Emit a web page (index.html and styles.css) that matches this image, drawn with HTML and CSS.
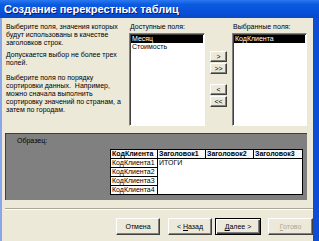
FILE: index.html
```html
<!DOCTYPE html>
<html lang="ru">
<head>
    <meta charset="UTF-8">
    <title>Создание перекрестных таблиц</title>
    <link rel="stylesheet" href="styles.css">
</head>
<body>
    <div class="window">
        <div class="titlebar">Создание перекрестных таблиц</div>
        <div class="dialog">
            <div class="top">
                <div class="intro">
                    <p>Выберите поля, значения которых<br>будут использованы в качестве<br>заголовков строк.</p>
                    <p>Допускается выбор не более трех<br>полей.</p>
                    <p class="last">Выберите поля по порядку<br>сортировки данных.&nbsp; Например,<br>можно сначала выполнить<br>сортировку значений по странам, а<br>затем по городам.</p>
                </div>
                <div class="field-col">
                    <div class="field-label">Доступные поля:</div>
                    <div class="listbox">
                        <div class="item selected">Месяц</div>
                        <div class="item">Стоимость</div>
                    </div>
                </div>
                <div class="move-buttons">
                    <button class="small-btn">&gt;</button>
                    <button class="small-btn">&gt;&gt;</button>
                    <button class="small-btn spaced">&lt;</button>
                    <button class="small-btn">&lt;&lt;</button>
                </div>
                <div class="field-col narrow">
                    <div class="field-label">Выбранные поля:</div>
                    <div class="listbox">
                        <div class="item selected">КодКлиента</div>
                    </div>
                </div>
            </div>

            <div class="sample">
                <div class="sample-label">Образец:</div>
                <div class="sample-grid">
                    <div class="cell head">КодКлиента</div>
                    <div class="cell head">Заголовок1</div>
                    <div class="cell head">Заголовок2</div>
                    <div class="cell head">Заголовок3</div>
                    <div class="cell">КодКлиента1</div>
                    <div class="cell totals">ИТОГИ</div>
                    <div class="cell">КодКлиента2</div>
                    <div class="cell">КодКлиента3</div>
                    <div class="cell">КодКлиента4</div>
                </div>
            </div>

            <div class="separator"></div>

            <div class="actions">
                <button class="btn">Отмена</button>
                <button class="btn back">&lt; <u>Н</u>азад</button>
                <button class="btn default"><u>Д</u>алее &gt;</button>
                <button class="btn disabled" disabled><u>Г</u>отово</button>
            </div>
        </div>
    </div>
</body>
</html>
```

FILE: styles.css
```css
:root {
    --face: #ECE9D8;
    --frame-blue: #0B4FD8;
    --shadow: #808080;
    --dark: #404040;
}

* {
    box-sizing: border-box;
}

body {
    margin: 0;
    font-family: 'Liberation Sans', Arial, sans-serif;
    font-size: 7px;
    color: #000;
    background: var(--face);
}

.window {
    width: 319px;
    height: 241px;
    overflow: hidden;
}

.titlebar {
    height: 18px;
    padding: 3px 0 0 4px;
    color: #fff;
    font-size: 11px;
    font-weight: bold;
    line-height: 12px;
    text-shadow: 1px 1px 0 #0A1883;
    background: linear-gradient(#2A78F0, #0A5BE0 25%, #0750D8 70%, #0848C4);
}

.dialog {
    height: 223px;
    border-left: 2px solid #8AA6EA;
    border-right: 6px solid var(--frame-blue);
    background: var(--face);
}

.top {
    display: flex;
    padding: 4px 0 0 4px;
}

.intro {
    width: 123px;
    padding-top: 1px;
    line-height: 8px;
    white-space: nowrap;
}

.intro p {
    margin: 0 0 4px;
}

.intro p:nth-child(2) {
    margin-bottom: 7px;
}

.field-col {
    width: 76px;
}

.field-col.narrow {
    width: 75px;
}

.field-label {
    height: 8px;
    padding-left: 1px;
    line-height: 8px;
    margin-top: 1px;
}

.listbox {
    height: 93px;
    margin-top: 2px;
    padding: 1px;
    background: #fff;
    border-top: 1px solid var(--shadow);
    border-left: 1px solid var(--shadow);
    border-right: 1px solid #fff;
    border-bottom: 1px solid #fff;
    box-shadow: inset 1px 1px 0 var(--dark);
}

.item {
    height: 8px;
    padding-left: 1px;
    line-height: 8px;
}

.item.selected {
    background: #000;
    color: #fff;
}

.move-buttons {
    width: 27px;
    display: flex;
    flex-direction: column;
    align-items: center;
    padding-top: 29px;
    gap: 1px;
}

.small-btn {
    width: 17px;
    height: 11px;
    padding: 0;
    font-family: inherit;
    font-size: 7px;
    line-height: 8px;
    color: #000;
    background: var(--face);
    border-top: 1px solid #fff;
    border-left: 1px solid #fff;
    border-right: 1px solid var(--dark);
    border-bottom: 1px solid var(--dark);
    box-shadow: inset -1px -1px 0 var(--shadow);
}

.small-btn.spaced {
    margin-top: 9px;
}

.sample {
    height: 67px;
    margin: 7px 0 0 3px;
    width: 302px;
    padding: 3px 0 0 11px;
    background: #808080;
    border-top: 1px solid var(--dark);
    border-left: 1px solid var(--dark);
}

.sample-label {
    line-height: 8px;
}

.sample-grid {
    display: grid;
    grid-template-columns: 46px 47px 47px 48px;
    grid-template-rows: repeat(5, 8px);
    gap: 1px;
    width: 193px;
    margin: 4px 0 0 93px;
    border: 1px solid #000;
    background: #000;
}

.cell {
    background: #fff;
    padding-left: 1px;
    line-height: 8px;
    white-space: nowrap;
    overflow: hidden;
}

.cell.head {
    font-weight: bold;
    background: #F7F7F7;
}

.cell.totals {
    grid-column: 2 / 5;
    grid-row: 2 / 6;
}

.separator {
    height: 2px;
    margin: 8px 0 0 3px;
    border-top: 1px solid #ACA899;
    border-bottom: 1px solid #fff;
}

.actions {
    display: flex;
    justify-content: flex-end;
    padding: 8px 0 0 0;
}

.btn {
    width: 44px;
    height: 17px;
    padding: 0;
    font-family: inherit;
    font-size: 7px;
    color: #000;
    background: var(--face);
    border-top: 1px solid #fff;
    border-left: 1px solid #fff;
    border-right: 1px solid var(--dark);
    border-bottom: 1px solid var(--dark);
    box-shadow: inset -1px -1px 0 var(--shadow);
}

.btn u {
    text-decoration: underline;
}

.btn.back {
    margin-left: 8px;
}

.btn.default {
    width: 46px;
    margin-left: 3px;
    border: 1px solid #000;
    box-shadow: inset 1px 1px 0 #fff, inset -1px -1px 0 var(--dark), inset -2px -2px 0 var(--shadow);
}

.btn.disabled {
    width: 45px;
    margin-left: 7px;
    color: #ACA899;
}
```
